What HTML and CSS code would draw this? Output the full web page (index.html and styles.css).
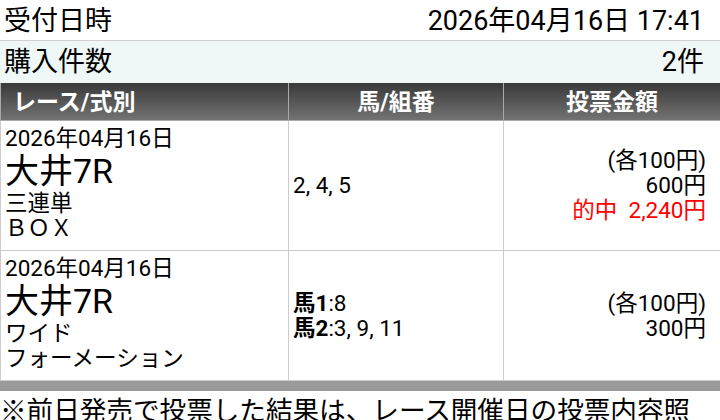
FILE: index.html
```html
<!DOCTYPE html>
<html lang="ja">
<head>
<meta charset="utf-8">
<link rel="stylesheet" href="styles.css">
</head>
<body>
<div class="info-row">
  <span>受付日時</span>
  <span>2026年04月16日 17:41</span>
</div>
<div class="info-row alt">
  <span>購入件数</span>
  <span>2件</span>
</div>
<table class="bets">
  <colgroup>
    <col class="c1">
    <col class="c2">
    <col class="c3">
  </colgroup>
  <thead>
    <tr>
      <th class="left">レース/式別</th>
      <th>馬/組番</th>
      <th>投票金額</th>
    </tr>
  </thead>
  <tbody>
    <tr>
      <td class="race">
        <div class="date">2026年04月16日</div>
        <div class="name">大井7R</div>
        <div class="type">三連単</div>
        <div class="type">ＢＯＸ</div>
      </td>
      <td class="horses">2, 4, 5</td>
      <td class="amount">
        <div>(各100円)</div>
        <div>600円</div>
        <div class="hit">的中&nbsp;&nbsp;2,240円</div>
      </td>
    </tr>
    <tr>
      <td class="race">
        <div class="date">2026年04月16日</div>
        <div class="name">大井7R</div>
        <div class="type">ワイド</div>
        <div class="type">フォーメーション</div>
      </td>
      <td class="horses">
        <div><b>馬1</b>:8</div>
        <div><b>馬2</b>:3, 9, 11</div>
      </td>
      <td class="amount">
        <div>(各100円)</div>
        <div>300円</div>
      </td>
    </tr>
  </tbody>
</table>
<div class="bar"></div>
<p class="note">※前日発売で投票した結果は、レース開催日の投票内容照会でご確認ください。</p>
</body>
</html>
```

FILE: styles.css
```css
html, body {
  margin: 0;
  padding: 0;
  background: #fff;
  overflow: hidden;
}
body {
  width: 720px;
  font-family: Roboto, "Noto Sans CJK JP", sans-serif;
  color: #000;
}
.info-row {
  display: flex;
  justify-content: space-between;
  align-items: center;
  box-sizing: border-box;
  height: 41px;
  padding: 0 16px 3px 4px;
  font-size: 27px;
  border-bottom: 1px solid #cfcfcf;
}
.info-row.alt {
  height: 42px;
  padding-bottom: 5px;
  background: #eff7f7;
  border-bottom: none;
}
.bets {
  width: 720px;
  border-collapse: collapse;
  table-layout: fixed;
}
.c1 { width: 288px; }
.c2 { width: 215px; }
.c3 { width: 217px; }
.bets thead tr {
  height: 37px;
}
.bets th {
  padding: 0 0 3px 0;
  background: linear-gradient(#3a3a3a, #727272);
  color: #fff;
  font-size: 23px;
  font-weight: bold;
  text-align: center;
  border: 1px solid #aaaaaa;
  border-top: none;
}
.bets th.left {
  text-align: left;
  padding-left: 12px;
}
.bets tbody tr {
  height: 130px;
}
.bets td {
  border: 1px solid #cccccc;
  vertical-align: middle;
  font-size: 22.5px;
  line-height: 25px;
  padding: 0 4px;
}
.bets td.race {
  padding: 5px 4px 0 4px;
  vertical-align: top;
}
.name {
  font-size: 34px;
  line-height: 40px;
}
.amount {
  text-align: right;
}
.bets td.amount {
  padding-right: 14px;
}
.hit {
  color: #ff0000;
}
.horses b {
  font-weight: bold;
}
.bar {
  height: 10px;
  background: #9a9a9a;
}
.note {
  margin: 0;
  padding: 3px 12px 0 0;
  font-size: 26.6px;
  line-height: 34px;
}
```
